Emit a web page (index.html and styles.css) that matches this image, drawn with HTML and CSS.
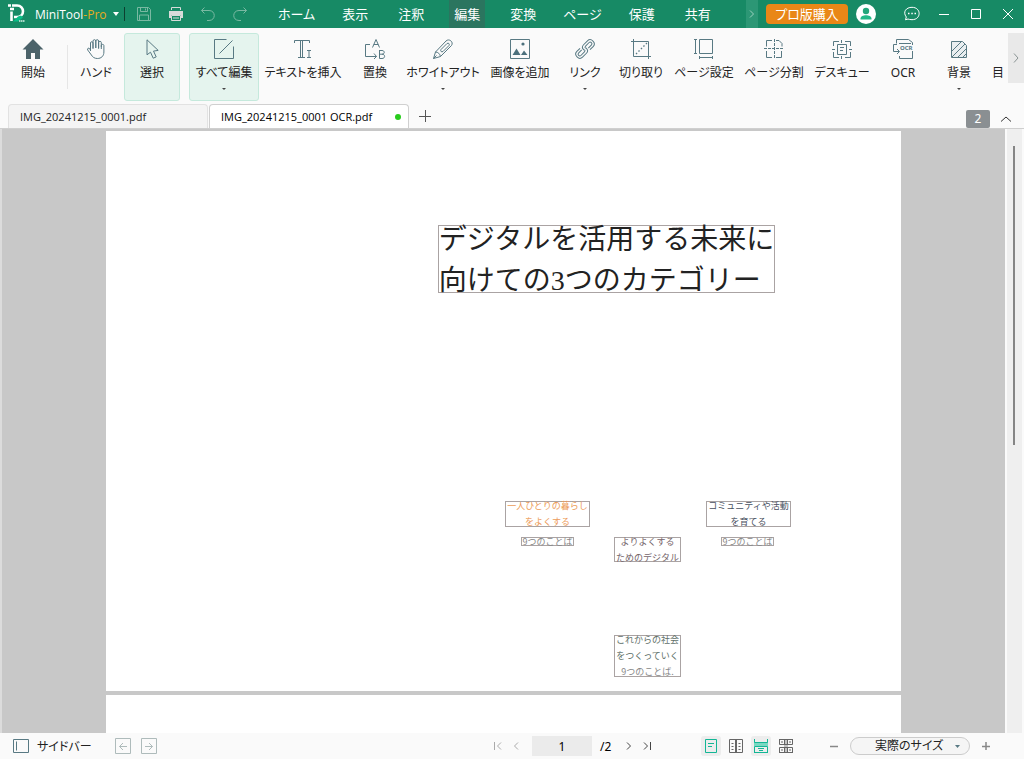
FILE: index.html
```html
<!DOCTYPE html>
<html lang="ja">
<head>
<meta charset="utf-8">
<meta name="viewport" content="width=device-width, initial-scale=1">
<title>MiniTool PDF Editor</title>
<link rel="stylesheet" href="styles.css">
</head>
<body>
<div class="app">
  <header class="titlebar">
    <div class="brand">
      <svg class="logo" viewBox="0 0 20 20" width="20" height="20" aria-hidden="true"><path d="M1 1.500h3M3 5h4M5 1.500h5c8 0 8 11.500 0 11.500H7M4.500 7.500V17" fill="none" stroke="#fff" stroke-width="2.600"/><path d="M6 17.500l5-5 3-1 2 2-5 4z" fill="#08bd86"/><path d="M12 17h6" stroke="#d8f1e7" stroke-width="1.500" stroke-dasharray="1.500 .5"/></svg>
      <span class="brand-name">MiniTool<span class="brand-pro">-Pro</span></span>
      <button class="brand-menu" aria-label="メニュー"><svg viewBox="0 0 6 4" width="6" height="4"><path d="M0 0h6L3 4z" fill="#fff"/></svg></button>
    </div>
    <div class="quick">
      <button class="quick-btn dim" aria-label="保存"><svg viewBox="0 0 16 16" width="16" height="16"><path d="M1.500 1.500h11l2 2v11h-13zM4.500 1.500v4h7v-4M3.500 14.500V9h9v5.500M9.500 2.500v2"/></svg></button>
      <button class="quick-btn" aria-label="印刷"><svg viewBox="0 0 16 16" width="16" height="16"><path d="M3.500 4V1.500h9V4" stroke="#d7dcda"/><path d="M1 5h14v7h-2V9H3v3H1z" fill="#d7dcda" stroke="none"/><path d="M3.500 9.500h9v5h-9zM5 12h6" stroke="#d7dcda"/></svg></button>
      <button class="quick-btn dim" aria-label="元に戻す"><svg viewBox="0 0 16 16" width="16" height="16"><path d="M4.500 1.500l-3 3 3 3M1.500 4.500h7.500c7 0 7 10 0 10H7"/></svg></button>
      <button class="quick-btn dim" aria-label="やり直し"><svg viewBox="0 0 16 16" width="16" height="16"><path d="M11.500 1.500l3 3-3 3M14.500 4.500H7c-7 0-7 10 0 10h2"/></svg></button>
    </div>
    <nav class="menu">
      <button>ホーム</button><button>表示</button><button>注釈</button><button class="current">編集</button><button>変換</button><button>ページ</button><button>保護</button><button>共有</button>
    </nav>
    <button class="menu-more" aria-label="さらに表示"><svg viewBox="0 0 6 8" width="6" height="8"><path d="M1 .5L4.500 4 1 7.500"/></svg></button>
    <button class="buy">プロ版購入</button>
    <button class="avatar" aria-label="アカウント"><svg viewBox="0 0 20 20" width="20" height="20"><circle cx="10" cy="10" r="10" fill="#fff"/><circle cx="10" cy="7" r="3.200" fill="#22a67a"/><path d="M4.500 15.500v-1c0-4.500 11-4.500 11 0v1z" fill="#22b988"/></svg></button>
    <div class="window-tools">
      <button aria-label="チャット"><svg viewBox="0 0 16 16" width="16" height="16"><path d="M1.500 13.800l.8-2.800C-1.500 6 2 1.300 8 1.300c9.500 0 9.500 12.400 0 12.400-1.800 0-3-.4-4-.7z"/><path d="M4 7.500h1.500M7.300 7.500h1.500M10.500 7.500H12" stroke-width="1.600"/></svg></button>
      <button aria-label="最小化"><svg viewBox="0 0 10 10" width="10" height="10"><path d="M0 5.500h10"/></svg></button>
      <button aria-label="最大化"><svg viewBox="0 0 10 10" width="10" height="10"><path d="M.5.5h9v9h-9z"/></svg></button>
      <button aria-label="閉じる"><svg viewBox="0 0 10 10" width="10" height="10"><path d="M0 0l10 10M10 0L0 10"/></svg></button>
    </div>
  </header>

  <div class="ribbon">
    <div class="tools">
      <button class="tool narrow"><svg viewBox="0 0 20 20"><path d="M10 0l10.500 10.500H17V20h-5v-6H8v6H3V10.500H-.5z" fill="#4c636a" stroke="none"/></svg><span>開始</span></button>
      <span class="divider"></span>
      <button class="tool narrow"><svg viewBox="0 0 20 20"><path d="M4.500 12V4c0-1.700 2.500-1.700 2.500 0v6M7 9V2c0-1.800 2.800-1.800 2.800 0v7M9.800 9V2c0-1.800 2.800-1.800 2.800 0v7.500M12.600 9.500V3.500c0-1.600 2.700-1.600 2.700 0V10M15.300 8V6.500c0-1.500 2.600-1.500 2.600 0V13c0 4-2.600 6.500-6.500 6.500-3 0-4.900-1.500-6-3.500L1.700 11c-.8-1.600 1-2.500 2-1.300l.8 1.300"/></svg><span>ハンド</span></button>
      <button class="tool narrow active"><svg viewBox="0 0 20 20"><path d="M5 .8v15l3.500-2.600 2.700 6 3-1.300-2.700-5.800 4.700-.7z"/></svg><span>選択</span></button>
      <span class="spacer"></span>
      <button class="tool medium active"><svg viewBox="0 0 20 20"><path d="M19.500 7.500v12H.5V.5h12M5.500 14.500L18.500 1.500"/></svg><span>すべて編集</span><i class="drop"></i></button>
      <button class="tool xwide"><svg viewBox="0 0 20 20"><path d="M1.500 4V1.500h15V4M7.500 1.500v17M9.500 1.500v17M5 18.500h7M14 11.500h4M14 18.500h4M16 11.500v7"/></svg><span>テキストを挿入</span></button>
      <button class="tool narrow"><svg viewBox="0 0 20 20"><path d="M5 5.500H.5v12h11M9 14.500l2.500 3L9 20M7.500 8.500l3.500-8 3.500 8M8.800 5.500h4.400M14.500 11v8.500M14.500 11.500h2.500c3 0 3 3.700 0 3.700h-2.500M17 15.200c3.500 0 3.500 4.300 0 4.300h-2.500"/></svg><span>置換</span></button>
      <button class="tool wide"><svg viewBox="0 0 20 20"><path d="M.5 19.500l2-6.500L13 2c3-3 8 1 5.500 4.500L7.500 17.500zM2.500 13c2.500 0 4.500 2 5 4.500M14 4.500L8 10.500c-1 1.500.5 3 2 2l6-6c1-1.500-.5-3-2-2M.5 19.500l3-3"/></svg><span>ホワイトアウト</span><i class="drop"></i></button>
      <button class="tool broad"><svg viewBox="0 0 20 20"><path d="M.5.500h19v19H.5z"/><path d="M2.500 16l4-6.500 4 6.500zM11 16l3-4.500 3.500 4.500z" fill="#4c707c" stroke="none"/><circle cx="13" cy="5" r="1.600" fill="#4c707c" stroke="none"/></svg><span>画像を追加</span></button>
      <button class="tool narrow"><svg viewBox="0 0 20 20"><g transform="rotate(-45 10 10)"><path d="M8.500 10v-.5c0-2 1.500-3.500 3.500-3.500h5.500c5 0 5 8 0 8H13M10.800 10c0-1 .7-1.700 1.700-1.700h5c2 0 2 3.400 0 3.400H13"/><path d="M11.500 10v.5c0 2-1.500 3.500-3.500 3.500H2.500c-5 0-5-8 0-8H7M9.200 10c0 1-.7 1.700-1.700 1.700h-5c-2 0-2-3.400 0-3.400H7"/></g></svg><span>リンク</span><i class="drop"></i></button>
      <button class="tool narrow"><svg viewBox="0 0 20 20"><path d="M0 2.500h17.500V20M2.500 0v17.500H20"/><path d="M5 15L16 4" stroke-width="1.300" stroke-dasharray="1.500 2"/></svg><span>切り取り</span></button>
      <button class="tool medium"><svg viewBox="0 0 20 20"><path d="M5.500.5h13v14h-13zM1.500.500v14M0 .5h3M0 14.500h3M5.500 18.500h13M5.500 17v3M18.500 17v3"/></svg><span>ページ設定</span></button>
      <button class="tool medium"><svg viewBox="0 0 20 20"><path d="M2.500 7.500v-6H8M12 1.500h3l3 3v3M2.500 12v6.500H8M12 18.500h5.500V12"/><path d="M10.500 0v20M0 9.500h20" stroke-dasharray="3 1"/></svg><span>ページ分割</span></button>
      <button class="tool slim"><svg viewBox="0 0 20 20"><path d="M1.500 7V2.500H7M13 2.500h5.500V7M1.500 13v5.500H7M13 18.500h5.500V13M0 10.500h3M17 10.500h3M9.500 1v3M9.500 17v3M5.500 5.500h9v10h-9zM8 8.500h4M8 11.500h3"/></svg><span>デスキュー</span></button>
      <button class="tool narrow"><svg viewBox="0 0 20 20"><path d="M3.500 4.500v-4h12l4 3V6M19.500 12v7.500h-13V17M4 5.500H.5v7H6M4 10l2.500 2.500L4 15M6 4.500h12"/><text x="7" y="11" class="ocr-mark">OCR</text></svg><span>OCR</span></button>
      <button class="tool narrow"><svg viewBox="0 0 20 20"><path d="M2.500 2.500h11l4 4v12h-15z" fill="#e9eef0"/><path d="M3 12l9.500-9.500M3 18L16 5M9 18l8-8M14 18l3-3"/></svg><span>背景</span><i class="drop"></i></button>
      <button class="tool tail"><span>目</span></button>
    </div>
    <button class="ribbon-more" aria-label="次のツール"><svg viewBox="0 0 6 10" width="6" height="10"><path d="M1 .5L5 5 1 9.500"/></svg></button>
  </div>

  <div class="tabs" role="tablist">
    <button class="tab" role="tab" aria-selected="false">IMG_20241215_0001.pdf</button>
    <button class="tab open" role="tab" aria-selected="true">IMG_20241215_0001 OCR.pdf<span class="dot"></span></button>
    <button class="add" aria-label="新しいタブ"><svg viewBox="0 0 12 12" width="12" height="12"><path d="M0 6.500h12M6.500 0v12"/></svg></button>
    <span class="count">2</span>
    <button class="collapse" aria-label="リボンを折りたたむ"><svg viewBox="0 0 10 6" width="10" height="6"><path d="M0 5.500L5 1l5 4.500"/></svg></button>
  </div>

  <main class="workspace">
    <div class="viewer">
      <section class="page">
        <h1 class="block heading">デジタルを活用する未来に<br>向けての3つのカテゴリー</h1>
        <p class="block living">一人ひとりの暮らし<br>をよくする</p>
        <p class="block words-left">9つのことば</p>
        <p class="block digital">よりよくする<br>ためのデジタル</p>
        <p class="block community">コミュニティや活動<br>を育てる</p>
        <p class="block words-right">9つのことば</p>
        <p class="block society">これからの社会<br>をつくっていく<br><span class="muted">9つのことば.</span></p>
      </section>
      <section class="page"></section>
    </div>
    <div class="scrollbar"><div class="thumb"></div></div>
  </main>

  <footer class="status">
    <div class="status-left">
      <button class="sidebar-btn"><svg viewBox="0 0 16 14" width="16" height="14"><path d="M.5.5h15v13H.5zM3.500 2.500v9"/></svg>サイドバー</button>
      <button class="step" aria-label="前の表示"><svg viewBox="0 0 16 16" width="16" height="16"><path d="M.5.5h15v15H.5zM12 8.500H4.500M8 5L4.500 8.500 8 12"/></svg></button>
      <button class="step" aria-label="次の表示"><svg viewBox="0 0 16 16" width="16" height="16"><path d="M.5.5h15v15H.5zM4 8.500h7.500M8 5l3.500 3.500L8 12"/></svg></button>
    </div>
    <div class="pager">
      <button class="off" aria-label="最初のページ"><svg viewBox="0 0 8 8" width="8" height="8"><path d="M.5 0v8M7 .500L3.500 4 7 7.500"/></svg></button>
      <button class="off" aria-label="前のページ"><svg viewBox="0 0 8 8" width="8" height="8"><path d="M6 .500L2.500 4 6 7.500"/></svg></button>
      <input type="text" value="1" aria-label="ページ番号">
      <span class="total">/2</span>
      <button aria-label="次のページ"><svg viewBox="0 0 8 8" width="8" height="8"><path d="M2 .500L5.500 4 2 7.500"/></svg></button>
      <button aria-label="最後のページ"><svg viewBox="0 0 8 8" width="8" height="8"><path d="M7.500 0v8M1 .500L4.500 4 1 7.500"/></svg></button>
    </div>
    <div class="views">
      <button class="chosen" aria-label="単一ページ"><svg viewBox="0 0 14 14" width="14" height="14"><path d="M1.500.5h11v13h-11zM4 4.500h6M4 7.500h4"/></svg></button>
      <button aria-label="見開き"><svg viewBox="0 0 14 14" width="14" height="14"><path d="M.5.5h13v13H.5zM2.500 4.500h2M2.500 7.500h2M9.500 4.500h2M9.500 7.500h2M2.500 10.500h2M9.500 10.500h2"/><path d="M7 0v14" stroke-width="2"/></svg></button>
      <button class="chosen" aria-label="連続ページ"><svg viewBox="0 0 14 14" width="14" height="14"><path d="M0 3h14v4H0z" fill="#79d8c2" stroke="none"/><path d="M.5 0v3.500h13V0M.5 14V7.500h13V14M.5 13.500h13M4 9.500h6M5 11.500h4"/></svg></button>
      <button aria-label="見開き連続"><svg viewBox="0 0 14 14" width="14" height="14"><path d="M5 0h4v14H5z" fill="#c4c4c4" stroke="none"/><path d="M.5 0v5.500h13V0M0 .5h14M.5 14V8.500h13V14M0 13.500h14M5.500 0v5.500M8.500 0v5.500M5.500 8.500V14M8.500 8.500V14M2 3h2M10 3h2M2 11h2M10 11h2"/></svg></button>
    </div>
    <div class="zoom">
      <button aria-label="縮小"><svg viewBox="0 0 8 8" width="8" height="8"><path d="M0 4.500h8" stroke-width="1.500"/></svg></button>
      <div class="zoom-box">
        <select aria-label="表示倍率"><option>実際のサイズ</option></select>
        <svg viewBox="0 0 5 3" width="5" height="3"><path d="M0 0h5L2.500 3z"/></svg>
      </div>
      <button aria-label="拡大"><svg viewBox="0 0 8 8" width="8" height="8"><path d="M0 4.500h8M4 0v8" stroke-width="1.500"/></svg></button>
    </div>
  </footer>
</div>
</body>
</html>
```
FILE: styles.css
```css
* { box-sizing: border-box; }

body {
  margin: 0;
  font-family: "Noto Sans", "Noto Sans CJK JP", sans-serif;
  font-size: 12px;
  font-feature-settings: "palt";
  color: #222;
}

button, input, select {
  font: inherit;
  font-feature-settings: inherit;
  color: inherit;
  border: 0;
  padding: 0;
  margin: 0;
  background: none;
}

svg { display: block; flex: none; fill: none; stroke: currentColor; }

.app { display: flex; flex-direction: column; height: 100vh; background: #fafafa; }

/* Title bar */
.titlebar { display: flex; align-items: center; flex: none; height: 28px; background: #178a65; color: #fff; }
.brand { display: flex; align-items: center; flex: none; width: 125px; height: 14px; padding-left: 7px; border-right: 1px solid #0d3f30; }
.brand-name { margin-left: 8px; font-family: "Open Sans", sans-serif; font-size: 12px; white-space: nowrap; }
.brand-pro { color: #e7ac1c; }
.brand-menu { margin-left: auto; margin-right: 5px; }
.brand-menu svg, .avatar svg, .logo { stroke: none; }
.quick { display: flex; flex: none; gap: 16px; padding: 0 28px 0 11px; }
.quick-btn.dim { color: #79b9a2; }
.menu { display: flex; flex: 1; min-width: 0; gap: 20px; overflow: hidden; align-self: stretch; }
.menu button { flex: none; min-width: 36px; padding: 0 2px; font-size: 13px; line-height: 26px; }
.menu .current { background: #2b755f; }
.menu-more { display: grid; place-items: center; flex: none; width: 12px; height: 28px; background: #2c9775; color: #9bd0bf; }
.buy { flex: none; width: 82px; height: 20px; margin: 0 8px; border-radius: 4px; background: #e98717; font-size: 13px; line-height: 18px; white-space: nowrap; }
.window-tools { display: flex; flex: none; margin-left: 20px; }
.window-tools button { display: grid; place-items: center; width: 32px; height: 28px; }

/* Ribbon */
.ribbon { display: flex; flex: none; height: 76px; padding-top: 5px; }
.tools { display: flex; flex: 1; min-width: 0; overflow: hidden; padding-left: 5px; margin-right: 2px; }
.tool { display: flex; flex: none; flex-direction: column; align-items: center; height: 68px; padding-top: 5px; border: 1px solid transparent; border-radius: 3px; white-space: nowrap; line-height: 18px; }
.tool svg { width: 20px; height: 20px; color: #587983; overflow: visible; }
.tool span { margin-top: 5px; font-size: 12px; }
.narrow { width: 56px; }
.slim { width: 66px; }
.medium { width: 70px; }
.broad { width: 74px; }
.wide { width: 80px; }
.xwide { width: 88px; }
.tail { padding: 25px 0 0 4px; }
.tool.active { background: #e5f4ee; border-color: #c5e9dc; }
.drop { margin-top: 6px; border: 2px solid transparent; border-top-color: #444; border-bottom: 0; }
.divider { flex: none; width: 1px; height: 44px; margin: 12px 0 0 6px; background: #e6e6e6; }
.spacer { flex: none; width: 9px; }
.ribbon-more { display: grid; place-items: center; flex: none; width: 16px; height: 50px; background: #e9e9e9; color: #8a9494; }
.ocr-mark { font: bold 6px "Noto Sans", sans-serif; fill: #587983; stroke: none; }

/* Document tabs */
.tabs { display: flex; align-items: flex-end; flex: none; height: 25px; padding: 0 8px; border-bottom: 1px solid #cfcfcf; }
.tab { display: flex; align-items: center; width: 200px; height: 24px; padding: 0 7px 0 11px; border: 1px solid #e2e2e2; border-bottom: 0; border-radius: 4px 4px 0 0; background: #f4f4f4; font-family: "Open Sans", sans-serif; font-size: 11px; white-space: nowrap; }
.tab.open { margin-left: 1px; background: #fff; border-color: #d0d0d0; color: #000; }
.dot { width: 6px; height: 6px; margin-left: auto; border-radius: 50%; background: #29cc1d; }
.add { align-self: center; margin-left: 10px; color: #555; }
.count { width: 24px; height: 18px; margin-left: auto; border-radius: 2px; background: #8a8f92; color: #fff; text-align: center; line-height: 17px; }
.collapse { height: 12px; margin: 0 5px 3px 11px; color: #333; }

/* Document area */
.workspace { display: flex; flex: 1; min-height: 0; }
.viewer { flex: 1; min-width: 0; overflow: hidden; padding-top: 2px; background: #c8c8c8; border-left: 2px solid #dcdcdc; }
.page { position: relative; width: 795px; height: 560px; margin: 0 auto 4px; background: #fff; }
.block {
  position: absolute;
  display: grid;
  place-content: center;
  margin: 0;
  border: 1px solid #aaa3a3;
  font-family: "Noto Sans CJK JP", sans-serif;
  font-size: 9px;
  font-weight: 400;
  font-feature-settings: normal;
  line-height: 16px;
  text-align: center;
  white-space: nowrap;
}
.heading { left: 332px; top: 94px; width: 337px; height: 68px; padding-top: 2px; font-family: "Liberation Serif", "Noto Sans CJK JP", serif; font-size: 28px; line-height: 41px; text-align: left; }
.living { left: 399px; top: 370px; width: 85px; height: 26px; color: #ed9b58; }
.words-left { left: 415px; top: 406px; width: 53px; height: 9px; color: #888; }
.digital { left: 508px; top: 406px; width: 67px; height: 25px; color: #75656b; }
.community { left: 600px; top: 370px; width: 85px; height: 26px; color: #485060; }
.words-right { left: 615px; top: 406px; width: 53px; height: 9px; color: #888; }
.society { left: 508px; top: 504px; width: 67px; height: 42px; color: #607069; }
.muted { color: #888; }
.scrollbar { flex: none; width: 19px; padding: 17px 0 0 6px; background: #efefef; border-left: 2px solid #fafafa; border-right: 2px solid #fafafa; }
.thumb { width: 2px; height: 51%; background: #858585; }

/* Status bar */
.status { display: flex; align-items: center; flex: none; height: 26px; }
.status-left { display: flex; align-items: center; flex: none; width: 490px; padding-left: 13px; gap: 10px; }
.sidebar-btn { display: flex; align-items: center; gap: 8px; min-width: 92px; }
.sidebar-btn svg { color: #587983; }
.step { color: #aebbbb; }
.pager { display: flex; align-items: center; gap: 2px; color: #444; }
.pager button, .views button, .zoom button { display: grid; place-items: center; width: 16px; height: 20px; }
.pager .off { color: #aaa; }
.pager input { width: 60px; height: 20px; margin: 0 4px 0 6px; background: #ebebeb; text-align: center; color: #000; }
.total { width: 21px; padding-left: 2px; color: #000; }
.views { display: flex; gap: 5px; margin-left: auto; color: #666; }
.views button { width: 20px; }
.views .chosen { border-radius: 3px; background: #ededed; color: #13b695; }
.zoom { display: flex; align-items: center; gap: 8px; margin: 0 30px; color: #888; }
.zoom-box { display: grid; align-items: center; }
.zoom-box > * { grid-area: 1 / 1; }
.zoom-box select { appearance: none; width: 120px; height: 18px; padding: 0 24px; border: 1px solid #ccc; border-radius: 9px; background: #f5f5f5; color: #222; line-height: 16px; }
.zoom-box svg { justify-self: end; margin-right: 10px; fill: #587983; stroke: none; pointer-events: none; }
```
